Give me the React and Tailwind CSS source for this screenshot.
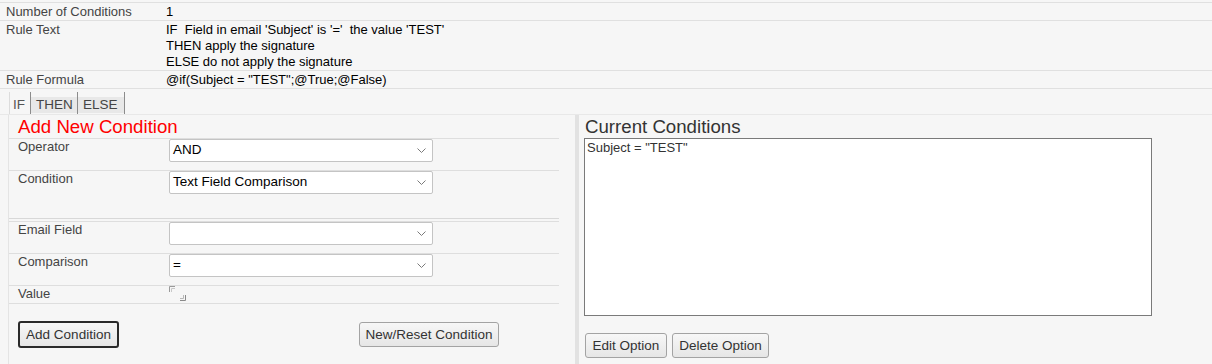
import React from 'react';

const Chevron = () => (
    <svg width="9" height="5" viewBox="0 0 9 5" className="shrink-0">
        <polyline points="0.5,0.5 4.5,4.5 8.5,0.5" fill="none" stroke="#7a7a7a" strokeWidth="1" />
    </svg>
);

const FakeSelect = ({ value }) => (
    <div className="w-[264px] h-[23px] bg-white border border-[#c4c4c4] rounded-[2px] flex items-center justify-between pl-[3px] pr-[6px] text-[13.5px] text-black">
        <span>{value}</span>
        <Chevron />
    </div>
);

const FormRow = ({ label, children, height = 'h-[32px]' }) => (
    <div className={`flex border-t border-[#dedede] ${height}`}>
        <div className="w-[160px] pl-[9px] leading-[16px] text-[#444]">{label}</div>
        <div>{children}</div>
    </div>
);

const Button = ({ children, className = '' }) => (
    <button className={`rounded-[3px] bg-gradient-to-b from-[#f7f7f7] to-[#e6e6e6] text-[13.5px] text-[#333] leading-none ${className}`}>
        {children}
    </button>
);

const InfoRow = ({ label, children, className = '' }) => (
    <div className={`flex border-t border-[#e0e0e0] ${className}`}>
        <div className="w-[166px] pl-[6px] text-[#444]">{label}</div>
        <div className="text-black whitespace-pre">{children}</div>
    </div>
);

export default function App() {
    return (
        <div className="w-[1212px] h-[364px] overflow-hidden bg-[#f6f6f6] font-['Liberation_Sans',Arial,sans-serif] text-[13px] text-[#333]">
            <div className="pt-[2px]">
                <InfoRow label="Number of Conditions" className="h-[18px] leading-[17px]">1</InfoRow>
                <InfoRow label="Rule Text" className="h-[50px] pt-[1px] leading-[16px]">
                    <div>IF  Field in email 'Subject' is '='  the value 'TEST'</div>
                    <div>THEN apply the signature</div>
                    <div>ELSE do not apply the signature</div>
                </InfoRow>
                <InfoRow label="Rule Formula" className="h-[19px] leading-[17px] border-b">@if(Subject = "TEST";@True;@False)</InfoRow>
            </div>

            {/* tabs */}
            <div className="h-[26px] border-b border-[#e8e8e8] pl-[9px] pt-[3px] flex text-[13.5px]">
                <div className="h-[22px] w-[22px] border-l border-[#dcdcdc] border-r border-r-[#8c8c8c] pl-[3px] pt-[5px] leading-[16px] text-[#555]">IF</div>
                <div className="h-[22px] w-[47px] border-r border-[#8c8c8c] pt-[5px]">
                    <div className="h-[16px] bg-[#e8e8e8] pl-[5px] leading-[16px] text-[#444]">THEN</div>
                </div>
                <div className="h-[22px] w-[47px] border-r border-[#8c8c8c] pt-[5px]">
                    <div className="h-[16px] bg-[#e8e8e8] pl-[5px] leading-[16px] text-[#444]">ELSE</div>
                </div>
            </div>

            <div className="flex h-[250px]">
                {/* left: add new condition */}
                <div className="ml-[8px] w-[567px] border-l border-[#e4e4e4] pr-[16px]">
                    <div className="h-[23px] pl-[9px] leading-[23px] text-[18.67px] text-[#ff0000]">Add New Condition</div>
                    <FormRow label="Operator"><FakeSelect value="AND" /></FormRow>
                    <FormRow label="Condition" height="h-[48px]"><FakeSelect value="Text Field Comparison" /></FormRow>
                    <div className="h-[3px] border-t border-[#d8d8d8]" />
                    <FormRow label="Email Field"><FakeSelect value="" /></FormRow>
                    <FormRow label="Comparison"><FakeSelect value="=" /></FormRow>
                    <FormRow label="Value" height="h-[18px]">
                        <svg width="17" height="15" viewBox="0 0 17 15">
                            <path d="M0.5 6 V0.5 H6" fill="none" stroke="#9a9a9a" />
                            <path d="M2.5 6 V2.5 H6" fill="none" stroke="#c8c8c8" />
                            <path d="M16.5 9 V14.5 H11" fill="none" stroke="#8a8a8a" />
                            <path d="M14.5 9 V12.5 H11" fill="none" stroke="#b8b8b8" />
                        </svg>
                    </FormRow>
                    <div className="border-t border-[#dedede] pt-[17px] pl-[9px] flex items-center">
                        <Button className="w-[101px] h-[27px] border-2 border-[#2a2a2a]">Add Condition</Button>
                        <Button className="ml-[240px] w-[140px] h-[25px] border border-[#a3a3a3]">New/Reset Condition</Button>
                    </div>
                </div>

                <div className="w-[4px] bg-[#e2e2e2]" />

                {/* right: current conditions */}
                <div className="pl-[5px]">
                    <div className="h-[23px] pl-[1px] leading-[23px] text-[18.67px] text-[#333]">Current Conditions</div>
                    <div className="w-[568px] h-[178px] bg-white border border-[#7a7a7a] px-[2px] pt-[1px] leading-[16px] text-[#333]">Subject = "TEST"</div>
                    <div className="mt-[17px] ml-[1px] flex gap-[5px]">
                        <Button className="w-[82px] h-[25px] border border-[#a3a3a3]">Edit Option</Button>
                        <Button className="w-[97px] h-[25px] border border-[#a3a3a3]">Delete Option</Button>
                    </div>
                </div>
            </div>
        </div>
    );
}
